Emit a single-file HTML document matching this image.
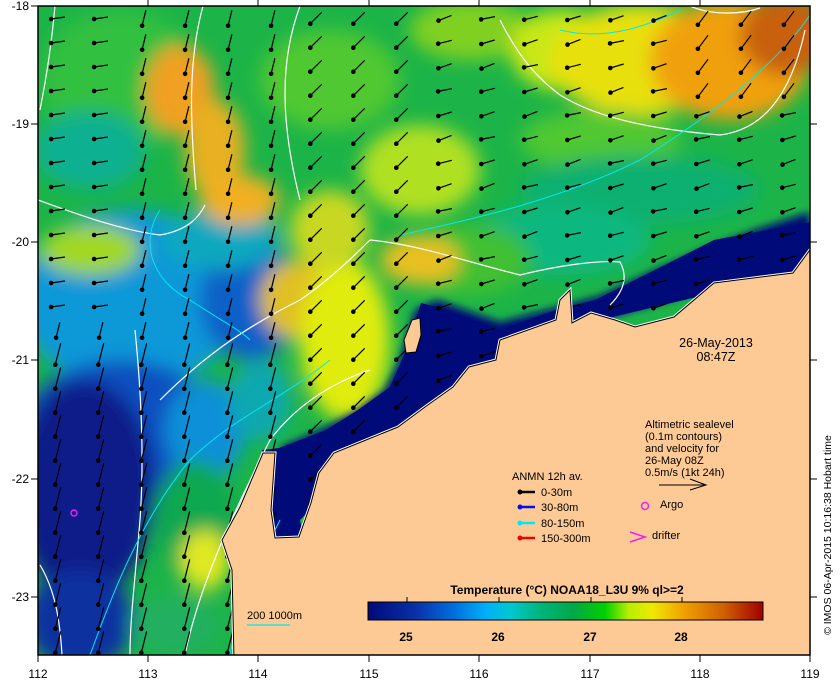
<!DOCTYPE html>
<html><head><meta charset="utf-8"><style>
html,body{margin:0;padding:0;background:#fff;width:840px;height:680px;overflow:hidden}
svg text{font-family:"Liberation Sans",sans-serif}
</style></head><body>
<svg id="s" width="840" height="680" viewBox="0 0 840 680" xmlns="http://www.w3.org/2000/svg">
<defs>
<clipPath id="pc"><rect x="38" y="6" width="772" height="649"/></clipPath>
<filter id="b" x="-20%" y="-20%" width="140%" height="140%"><feGaussianBlur stdDeviation="9"/></filter>
<filter id="b2" x="-20%" y="-20%" width="140%" height="140%"><feGaussianBlur stdDeviation="4"/></filter>
<linearGradient id="cb" x1="0" x2="1" y1="0" y2="0">
<stop offset="0" stop-color="#000a78"/><stop offset="0.12" stop-color="#0a30a8"/>
<stop offset="0.22" stop-color="#0070e0"/><stop offset="0.3" stop-color="#00b0f8"/>
<stop offset="0.36" stop-color="#00c8d0"/><stop offset="0.44" stop-color="#00b478"/>
<stop offset="0.52" stop-color="#00a848"/><stop offset="0.6" stop-color="#00d000"/>
<stop offset="0.66" stop-color="#b8f000"/><stop offset="0.72" stop-color="#f0e800"/>
<stop offset="0.8" stop-color="#f0a000"/><stop offset="0.9" stop-color="#d06000"/>
<stop offset="1" stop-color="#a00000"/></linearGradient>
</defs>
<g clip-path="url(#pc)">
<rect x="38" y="6" width="772" height="649" fill="#1cb448"/>
<g filter="url(#b)">
<ellipse cx="120" cy="80" rx="80" ry="70" fill="#30c040"/>
<ellipse cx="180" cy="90" rx="35" ry="45" fill="#f0a020"/>
<ellipse cx="215" cy="150" rx="30" ry="50" fill="#e8b020"/>
<ellipse cx="90" cy="150" rx="55" ry="40" fill="#10b090"/>
<ellipse cx="330" cy="80" rx="70" ry="50" fill="#50c830"/>
<ellipse cx="420" cy="170" rx="60" ry="45" fill="#b0e020"/>
<ellipse cx="470" cy="30" rx="60" ry="30" fill="#80d020"/>
<ellipse cx="560" cy="50" rx="50" ry="40" fill="#c8e818"/>
<ellipse cx="640" cy="60" rx="90" ry="55" fill="#e8e010"/>
<ellipse cx="730" cy="60" rx="80" ry="60" fill="#f0a010"/>
<ellipse cx="785" cy="35" rx="45" ry="40" fill="#c86010"/>
<ellipse cx="600" cy="140" rx="80" ry="30" fill="#50c830"/>
<ellipse cx="640" cy="190" rx="120" ry="35" fill="#10b070"/>
<ellipse cx="560" cy="240" rx="90" ry="35" fill="#10b880"/>
<ellipse cx="470" cy="260" rx="60" ry="35" fill="#40c030"/>
<ellipse cx="130" cy="300" rx="110" ry="90" fill="#0898d8"/>
<ellipse cx="250" cy="300" rx="50" ry="60" fill="#1060c8"/>
<ellipse cx="220" cy="240" rx="60" ry="30" fill="#10a8c0"/>
<ellipse cx="90" cy="250" rx="50" ry="25" fill="#a0d820"/>
<ellipse cx="120" cy="430" rx="100" ry="70" fill="#1050c0"/>
<ellipse cx="85" cy="490" rx="70" ry="110" fill="#0a1a88"/>
<ellipse cx="80" cy="620" rx="55" ry="50" fill="#0830a0"/>
<ellipse cx="205" cy="430" rx="40" ry="50" fill="#0890d8"/>
<ellipse cx="195" cy="520" rx="40" ry="60" fill="#10a850"/>
<ellipse cx="205" cy="560" rx="25" ry="30" fill="#e0e820"/>
<ellipse cx="175" cy="625" rx="45" ry="30" fill="#20b060"/>
<ellipse cx="300" cy="300" rx="40" ry="40" fill="#e0c020"/>
<ellipse cx="345" cy="340" rx="45" ry="80" fill="#e0ec10"/>
<ellipse cx="260" cy="400" rx="30" ry="40" fill="#10a8b0"/>
<ellipse cx="240" cy="200" rx="40" ry="25" fill="#f0b020"/>
<ellipse cx="330" cy="230" rx="40" ry="40" fill="#c8d820"/>
<ellipse cx="420" cy="260" rx="40" ry="25" fill="#e8c020"/>
</g>
<g filter="url(#b2)">
<polygon points="810,212 760,228 714,245 655,270 600,296 500,322 437,300 415,310 400,360 385,390 355,412 320,430 279,448 300,470 340,460 460,380 600,320 810,260" fill="#000a78"/>
</g>
<polygon points="810,222 714,240 655,270 595,300 556,310 500,330 437,307 421,303 405,353 390,387 358,410 326,430 279,448 262,450 268,545 305,545 300,520 350,470 460,380 600,320 810,270" fill="#000a78"/>
<g fill="none" stroke="#fff" stroke-width="1.2">
<path d="M55,6 C52,40 46,80 40,110"/>
<path d="M203,6 C188,60 190,120 196,190"/>
<path d="M38,200 C80,215 120,230 160,235 C190,230 200,215 205,205"/>
<path d="M500,20 C520,60 540,80 560,95 C600,120 660,130 720,135 C760,130 790,100 805,30"/>
<path d="M300,6 C280,60 280,120 300,200"/>
<path d="M690,6 C710,15 740,15 760,8"/>
<path d="M135,330 C140,380 145,450 140,520 C135,580 130,620 130,655"/>
<path d="M40,565 C55,590 60,620 62,655"/>
<path d="M160,400 C200,360 240,330 300,300 C330,280 360,250 370,240"/>
<path d="M370,240 C420,245 460,260 520,275 C560,265 600,260 620,262 C630,280 620,295 610,305"/>
<path d="M185,655 C200,580 240,500 270,440 C300,400 340,380 370,370"/>
</g>
<g fill="none" stroke="#00e8f0" stroke-width="1">
<path d="M400,235 C470,220 560,200 640,160 C720,110 780,60 810,15"/>
<path d="M90,655 C110,600 140,520 190,460 C230,420 280,400 330,360"/>
<path d="M160,210 C140,240 150,280 190,300 C220,320 240,330 250,340"/>
<path d="M230,655 C240,600 260,560 280,520"/>
<path d="M560,30 C600,40 640,30 680,10"/>
</g>
<g id="arr" stroke="#000" stroke-width="1.2" fill="#000"></g>
<polygon fill="#fdca96" stroke="#fff" stroke-width="3" points="812,247 793,273 714,283 674,317 635,327 615,320 591,313 572,323 570,290 560,300 556,320 528,330 500,340 496,360 469,367 453,387 425,407 398,427 366,440 334,453 319,473 311,503 299,537 275,538 271,510 275,453 263,453 240,507 222,540 232,570 234,660 812,660"/>
<polygon fill="#fdca96" stroke="#000" stroke-width="1" points="812,247 793,273 714,283 674,317 635,327 615,320 591,313 572,323 570,290 560,300 556,320 528,330 500,340 496,360 469,367 453,387 425,407 398,427 366,440 334,453 319,473 311,503 299,537 275,538 271,510 275,453 263,453 240,507 222,540 232,570 234,660 812,660"/>
<polygon fill="#fdca96" stroke="#000" stroke-width="1" points="412,320 420,318 421,335 416,352 406,353 404,340"/>
</g>
<rect x="38" y="6" width="772" height="649" fill="none" stroke="#000" stroke-width="1.5"/>
<g stroke="#000" stroke-width="1">
<line x1="148" y1="0" x2="148" y2="6"/><line x1="258" y1="0" x2="258" y2="6"/><line x1="369" y1="0" x2="369" y2="6"/><line x1="479" y1="0" x2="479" y2="6"/><line x1="590" y1="0" x2="590" y2="6"/><line x1="700" y1="0" x2="700" y2="6"/>
<line x1="38" y1="655" x2="38" y2="662"/><line x1="148" y1="655" x2="148" y2="662"/><line x1="258" y1="655" x2="258" y2="662"/><line x1="369" y1="655" x2="369" y2="662"/><line x1="479" y1="655" x2="479" y2="662"/><line x1="590" y1="655" x2="590" y2="662"/><line x1="700" y1="655" x2="700" y2="662"/><line x1="810" y1="655" x2="810" y2="662"/>
<line x1="31" y1="6" x2="38" y2="6"/><line x1="31" y1="124" x2="38" y2="124"/><line x1="31" y1="242" x2="38" y2="242"/><line x1="31" y1="360" x2="38" y2="360"/><line x1="31" y1="479" x2="38" y2="479"/><line x1="31" y1="597" x2="38" y2="597"/>
<line x1="810" y1="124" x2="817" y2="124"/><line x1="810" y1="242" x2="817" y2="242"/><line x1="810" y1="360" x2="817" y2="360"/><line x1="810" y1="479" x2="817" y2="479"/><line x1="810" y1="597" x2="817" y2="597"/>
</g>
<g font-size="12" fill="#000">
<text x="38" y="678" text-anchor="middle">112</text><text x="148" y="678" text-anchor="middle">113</text><text x="258" y="678" text-anchor="middle">114</text><text x="369" y="678" text-anchor="middle">115</text><text x="479" y="678" text-anchor="middle">116</text><text x="590" y="678" text-anchor="middle">117</text><text x="700" y="678" text-anchor="middle">118</text><text x="810" y="678" text-anchor="middle">119</text>
<g text-anchor="end"><text x="29" y="10">-18</text><text x="29" y="128">-19</text><text x="29" y="246">-20</text><text x="29" y="364">-21</text><text x="29" y="483">-22</text><text x="29" y="601">-23</text></g>
</g>
<text x="831" y="535" font-size="10.5" text-anchor="middle" transform="rotate(-90 831 535)">© IMOS 06-Apr-2015 10:16:38 Hobart time</text>
<g font-size="12.5" text-anchor="middle"><text x="716" y="347">26-May-2013</text><text x="716" y="361">08:47Z</text></g>
<g font-size="11"><text x="645" y="428">Altimetric sealevel</text><text x="645" y="440">(0.1m contours)</text><text x="645" y="452">and velocity for</text><text x="645" y="464">26-May 08Z</text><text x="645" y="476">0.5m/s (1kt 24h)</text></g>
<path d="M659,485 H706 M690,479 L706,485 L690,490" fill="none" stroke="#000" stroke-width="1"/>
<text x="512" y="480" font-size="11">ANMN 12h av.</text>
<g stroke-width="2.5"><line x1="519" y1="492" x2="535" y2="492" stroke="#000"/><line x1="519" y1="507" x2="535" y2="507" stroke="#0010f0"/><line x1="519" y1="523" x2="535" y2="523" stroke="#00e8f0"/><line x1="519" y1="538" x2="535" y2="538" stroke="#f00000"/></g>
<circle cx="520" cy="492" r="2.5" fill="#000"/><circle cx="520" cy="507" r="2.5" fill="#0010f0"/><circle cx="520" cy="523" r="2.5" fill="#00e8f0"/><circle cx="520" cy="538" r="2.5" fill="#f00000"/>
<g font-size="11"><text x="541" y="496">0-30m</text><text x="541" y="511">30-80m</text><text x="541" y="527">80-150m</text><text x="541" y="542">150-300m</text><text x="660" y="508">Argo</text><text x="652" y="539">drifter</text></g>
<circle cx="645" cy="506" r="3.5" fill="none" stroke="#f020f0" stroke-width="1.5"/>
<path d="M630,532 L645,537 L630,542" fill="none" stroke="#f020f0" stroke-width="1.6"/>
<circle cx="74" cy="513" r="3" fill="none" stroke="#f020f0" stroke-width="1.4"/>
<text x="247" y="619" font-size="11">200  1000m</text>
<line x1="247" y1="625" x2="290" y2="625" stroke="#00e8f0" stroke-width="1.2"/>
<text x="567" y="594" font-size="12" font-weight="bold" text-anchor="middle">Temperature (°C) NOAA18_L3U 9% ql&gt;=2</text>
<rect x="368" y="602" width="395" height="18" fill="url(#cb)" stroke="#000" stroke-width="1"/>
<g stroke="#000"><line x1="407" y1="597" x2="407" y2="602"/><line x1="499" y1="597" x2="499" y2="602"/><line x1="591" y1="597" x2="591" y2="602"/><line x1="682" y1="597" x2="682" y2="602"/></g>
<g font-size="12" font-weight="bold" text-anchor="middle"><text x="406" y="641">25</text><text x="498" y="641">26</text><text x="590" y="641">27</text><text x="681" y="641">28</text></g>
</svg>
<script>
(function(){
var g=document.getElementById('arr'),h='';
for(var y=18;y<650;y+=24){for(var x=58;x<805;x+=43){
 var dx,dy,L;
 if(x<300){dx=-0.25;dy=1;L=y>330?22:16;if(x<120&&y<330){dx=-1;dy=0.15;L=14;}}
 else if(x<430){dx=-0.7;dy=0.7;L=16;}
 else if(x>700&&y<110){dx=-0.6;dy=0.8;L=17;}
 else {dx=-1;dy=0.2+((x*7+y*3)%5)/20;L=14;}
 var n=Math.sqrt(dx*dx+dy*dy);dx/=n;dy/=n;
 var tx=x+dx*L/2,ty=y+dy*L/2,sx=x-dx*L/2,sy=y-dy*L/2;
 h+='<line x1="'+sx.toFixed(1)+'" y1="'+sy.toFixed(1)+'" x2="'+tx.toFixed(1)+'" y2="'+ty.toFixed(1)+'"/><circle cx="'+tx.toFixed(1)+'" cy="'+ty.toFixed(1)+'" r="2.3" stroke="none"/>';
}}
g.innerHTML=h;
})();
</script>
</body></html>
